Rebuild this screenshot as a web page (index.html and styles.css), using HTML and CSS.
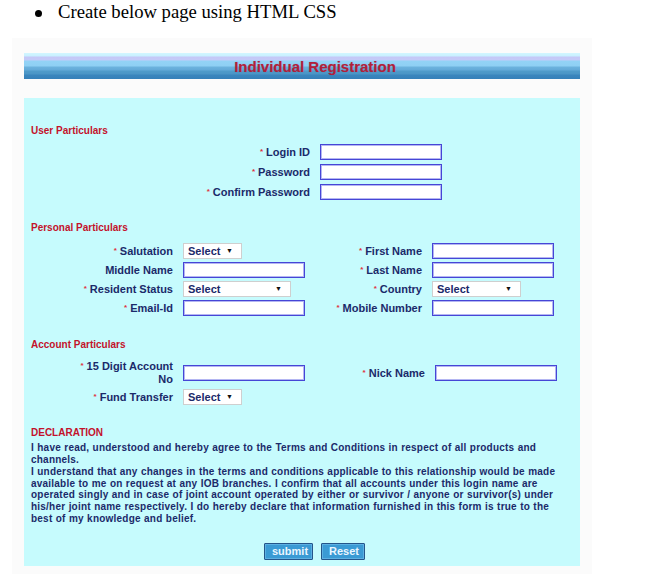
FILE: index.html
```html
<!DOCTYPE html>
<html>
<head>
<meta charset="utf-8">
<title>Individual Registration</title>
<link rel="stylesheet" href="styles.css">
</head>
<body>
<div class="note"><span class="bullet"></span><span>Create below page using HTML CSS</span></div>
<div class="sheet">
  <div class="titlebar">Individual Registration</div>
  <form class="panel">
    <h3 class="sec sec-user">User Particulars</h3>
    <div class="grid-user">
      <label class="lbl"><span class="req">*</span>Login ID</label>
      <input class="txt" type="text">
      <label class="lbl"><span class="req">*</span>Password</label>
      <input class="txt" type="password">
      <label class="lbl"><span class="req">*</span>Confirm Password</label>
      <input class="txt" type="password">
    </div>

    <h3 class="sec sec-personal">Personal Particulars</h3>
    <div class="grid-personal">
      <label class="lbl"><span class="req">*</span>Salutation</label>
      <span class="sel sel-s"><select><option>Select</option></select></span>
      <label class="lbl"><span class="req">*</span>First Name</label>
      <input class="txt" type="text">

      <label class="lbl">Middle Name</label>
      <input class="txt" type="text">
      <label class="lbl"><span class="req">*</span>Last Name</label>
      <input class="txt" type="text">

      <label class="lbl"><span class="req">*</span>Resident Status</label>
      <span class="sel sel-l"><select><option>Select</option></select></span>
      <label class="lbl"><span class="req">*</span>Country</label>
      <span class="sel sel-m"><select><option>Select</option></select></span>

      <label class="lbl"><span class="req">*</span>Email-Id</label>
      <input class="txt" type="text">
      <label class="lbl"><span class="req">*</span>Mobile Number</label>
      <input class="txt" type="text">
    </div>

    <h3 class="sec sec-account">Account Particulars</h3>
    <div class="grid-account">
      <label class="lbl lbl-two"><span class="req">*</span>15 Digit Account<br>No</label>
      <input class="txt" type="text">
      <label class="lbl"><span class="req">*</span>Nick Name</label>
      <input class="txt" type="text">

      <label class="lbl"><span class="req">*</span>Fund Transfer</label>
      <span class="sel sel-s"><select><option>Select</option></select></span>
    </div>

    <h3 class="sec sec-decl">DECLARATION</h3>
    <div class="decl">
      <p>I have read, understood and hereby agree to the Terms and Conditions in respect of all products and channels.</p>
      <p>I understand that any changes in the terms and conditions applicable to this relationship would be made available to me on request at any IOB branches. I confirm that all accounts under this login name are operated singly and in case of joint account operated by either or survivor / anyone or survivor(s) under his/her joint name respectively. I do hereby declare that information furnished in this form is true to the best of my knowledge and belief.</p>
    </div>

    <div class="actions">
      <button type="button" class="btn btn-submit">submit</button>
      <button type="reset" class="btn btn-reset">Reset</button>
    </div>
  </form>
</div>
</body>
</html>
```

FILE: styles.css
```css
* { box-sizing: border-box; }

body {
  margin: 0;
  background: #ffffff;
  font-family: "Liberation Sans", Arial, sans-serif;
}

.note {
  font-family: "Liberation Serif", "Times New Roman", serif;
  font-size: 18.67px;
  line-height: 22px;
  color: #000;
  padding: 1px 0 0 35px;
  display: flex;
  align-items: flex-start;
  height: 38px;
}

.bullet {
  width: 7px;
  height: 7px;
  margin: 9px 16px 0 0;
  border-radius: 50%;
  background: #000;
  flex: none;
}

.sheet {
  margin-left: 12px;
  width: 580px;
  background: #fbfbfb;
  padding: 15px 12px 8px 12px;
}

.titlebar {
  height: 26px;
  line-height: 27px;
  text-align: center;
  padding-left: 26px;
  font-size: 15px;
  font-weight: bold;
  color: #b01f3b;
  text-shadow: 0 0 1px rgba(176, 31, 59, 0.4);
  background: linear-gradient(to bottom,
    #d2f6ff 0px, #c8f0ff 3px,
    #c5c7f7 4px, #c3cbf8 7px,
    #93d3f6 8px, #8fd0f4 13px,
    #6cb3de 14px, #63aad8 17px,
    #4f9bca 18px, #4a95c6 21px,
    #3a86bd 22px, #3580b9 26px);
}

.panel {
  margin-top: 19px;
  background: #c6fbfd;
  padding: 27px 7px 6px 7px;
}

.sec {
  margin: 0;
  font-size: 10px;
  line-height: 12px;
  font-weight: bold;
  color: #c3122b;
}

.sec-personal { margin-top: 22px; }
.sec-account { margin-top: 23px; }
.sec-decl { margin-top: 22px; }

.lbl {
  font-size: 11px;
  font-weight: bold;
  color: #1b2a6a;
  text-align: right;
  line-height: 13px;
  white-space: nowrap;
}

.req {
  color: #e0303c;
  font-size: 8px;
  vertical-align: 2px;
  margin-right: 3px;
}

.grid-user {
  margin-top: 7px;
  display: grid;
  grid-template-columns: 279px 122px;
  column-gap: 10px;
  row-gap: 4px;
  align-items: center;
}

.grid-personal {
  margin-top: 9px;
  display: grid;
  grid-template-columns: 142px 122px 107px 122px;
  column-gap: 10px;
  row-gap: 3px;
  align-items: center;
}

.grid-account {
  margin-top: 8px;
  display: grid;
  grid-template-columns: 142px 122px 110px 122px;
  column-gap: 10px;
  row-gap: 3px;
  align-items: center;
}

.lbl-two { white-space: normal; }

.txt {
  display: block;
  width: 122px;
  height: 16px;
  margin: 0;
  padding: 0 3px;
  border: 1px solid #4646d6;
  box-shadow: inset 0 0 0 1px #b4b6f2;
  background: #ffffff;
  font-size: 11px;
}

.sel {
  position: relative;
  display: block;
  height: 16px;
}

.sel select {
  display: block;
  appearance: none;
  -webkit-appearance: none;
  width: 100%;
  height: 16px;
  margin: 0;
  padding: 0 0 0 4px;
  border: 1px solid #cfcfcf;
  border-radius: 0;
  background: #ffffff;
  font-family: "Liberation Sans", Arial, sans-serif;
  font-size: 11px;
  font-weight: bold;
  color: #1b2a6a;
  line-height: 14px;
}

.sel::after {
  content: "▼";
  position: absolute;
  right: 9px;
  top: 3px;
  font-size: 7px;
  line-height: 9px;
  color: #111;
  pointer-events: none;
}

.sel-s { width: 59px; }
.sel-l { width: 108px; }
.sel-m { width: 89px; }

.decl {
  margin-top: 3px;
  font-size: 10px;
  font-weight: bold;
  line-height: 11.85px;
  letter-spacing: 0.22px;
  word-spacing: 0.3px;
  color: #1b2a6a;
}

.decl p { margin: 0; }

.actions {
  margin-top: 18px;
  display: flex;
  justify-content: center;
  gap: 8px;
  padding-left: 25px;
}

.btn {
  height: 17px;
  margin: 0;
  padding: 0 7px;
  font-family: "Liberation Sans", Arial, sans-serif;
  font-size: 11px;
  font-weight: bold;
  color: #eaf6ff;
  background: #3a9ad4;
  border: 1px solid #24558a;
  box-shadow: inset 0 0 0 1px #5cb0e2;
  border-radius: 1px;
  line-height: 14px;
}

.btn-submit { width: 49px; }
.btn-reset { width: 44px; }
```
